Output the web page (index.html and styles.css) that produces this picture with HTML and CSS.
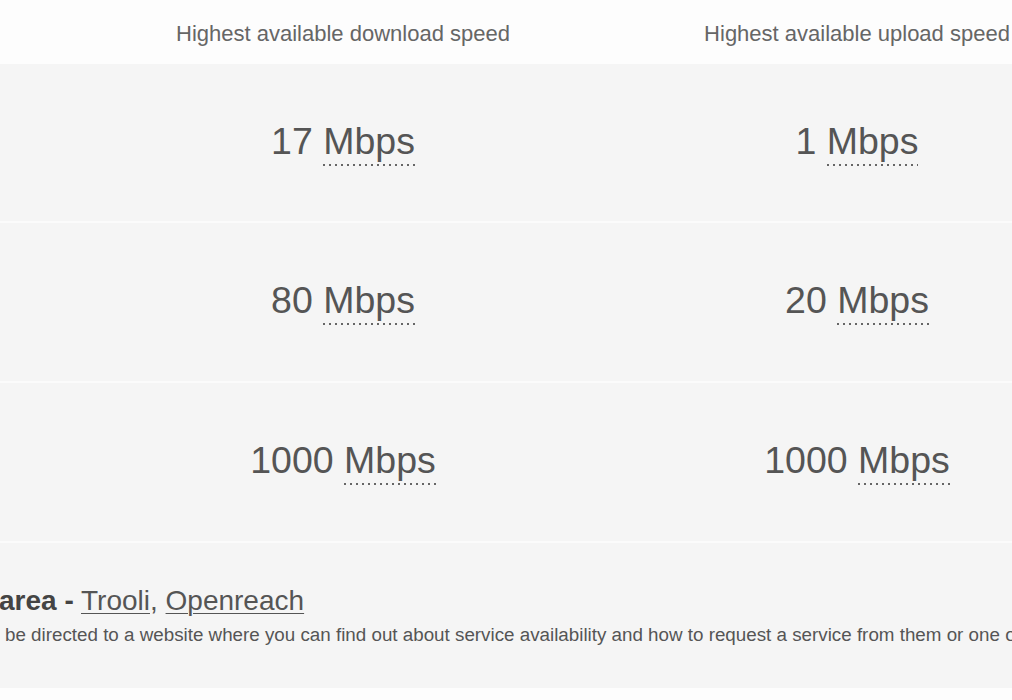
FILE: index.html
```html
<!DOCTYPE html>
<html lang="en">
<head>
<meta charset="utf-8">
<title>Broadband speeds</title>
<link rel="stylesheet" href="styles.css">
</head>
<body>
<div class="page">
  <div class="speeds">
    <div class="row head">
      <div class="cell">Technology</div>
      <div class="cell">Highest available download speed</div>
      <div class="cell">Highest available upload speed</div>
    </div>
    <div class="row data">
      <div class="cell"><span>Standard</span></div>
      <div class="cell"><span>17 <abbr class="unit" title="Megabits per second">Mbps</abbr></span></div>
      <div class="cell"><span>1 <abbr class="unit" title="Megabits per second">Mbps</abbr></span></div>
    </div>
    <div class="row data">
      <div class="cell"><span>Superfast</span></div>
      <div class="cell"><span>80 <abbr class="unit" title="Megabits per second">Mbps</abbr></span></div>
      <div class="cell"><span>20 <abbr class="unit" title="Megabits per second">Mbps</abbr></span></div>
    </div>
    <div class="row data">
      <div class="cell"><span>Ultrafast</span></div>
      <div class="cell"><span>1000 <abbr class="unit" title="Megabits per second">Mbps</abbr></span></div>
      <div class="cell"><span>1000 <abbr class="unit" title="Megabits per second">Mbps</abbr></span></div>
    </div>
  </div>
  <div class="providers">
    <p class="providers-title"><strong>area -</strong> <a href="#">Trooli</a>, <a href="#">Openreach</a></p>
    <p class="providers-note">be directed to a website where you can find out about service availability and how to request a service from them or one of their retailers.</p>
  </div>
</div>
</body>
</html>
```

FILE: styles.css
```css
html, body {
  margin: 0;
  padding: 0;
  background: #fdfdfd;
}

body {
  width: 1012px;
  height: 700px;
  overflow: hidden;
  font-family: "Liberation Sans", Arial, sans-serif;
  color: #555;
}

.page {
  width: 1012px;
  overflow: hidden;
}

.speeds {
  width: 1542px;
  margin-left: -428px;
}

.row {
  display: grid;
  grid-template-columns: 514px 514px 514px;
}

.cell {
  display: flex;
  align-items: center;
  justify-content: center;
  white-space: nowrap;
}

.head {
  height: 64px;
  box-sizing: border-box;
  padding-top: 3px;
  background: #fdfdfd;
  font-size: 22px;
  color: #666;
}

.data {
  height: 160px;
  box-sizing: border-box;
  padding-bottom: 3px;
  background: #f5f5f5;
  border-bottom: 2px solid #fbfbfb;
  font-size: 37.5px;
  color: #555;
}

.data:nth-child(2) {
  height: 159px;
}

.unit {
  text-decoration: none;
  padding-bottom: 4px;
  background: linear-gradient(to right, #666 0 2px, transparent 2px 6px) 0 100% / 6px 2px repeat-x;
}

.providers {
  height: 145px;
  box-sizing: border-box;
  padding-top: 42px;
  background: #f5f5f5;
}

.providers p {
  margin: 0;
  white-space: nowrap;
}

.providers-title {
  font-size: 28px;
  line-height: 32px;
  margin-left: -1px !important;
  color: #555;
}

.providers-title strong {
  color: #444;
}

.providers-title a {
  color: #555;
  text-decoration: underline;
  text-underline-offset: 3px;
  text-decoration-thickness: 1px;
}

.providers-note {
  margin-top: 7px !important;
  margin-left: 5px !important;
  font-size: 18.8px;
  line-height: 22px;
  color: #555;
}
```
